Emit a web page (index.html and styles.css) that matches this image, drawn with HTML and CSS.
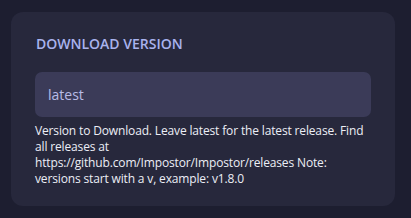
FILE: index.html
```html
<!DOCTYPE html>
<html lang="en">
  <head>
    <meta charset="UTF-8" />
    <meta name="viewport" content="width=device-width, initial-scale=1.0" />
    <title>Download version</title>
    <link rel="stylesheet" href="styles.css">
  </head>
  <body>
    <div class="card">
      <h2 class="title">DOWNLOAD VERSION</h2>
      <input class="field" type="text" value="latest" />
      <p class="help">
        Version to Download. Leave latest for the latest release. Find all releases at
        https://github.com/Impostor/Impostor/releases Note: versions start with a v, example: v1.8.0
      </p>
    </div>
  </body>
</html>
```

FILE: styles.css
```css
body {
  margin: 0;
  padding: 12px 16px 13px 11px;
  background-color: #1d1e30;
  font-family: "Open Sans", "Noto Sans", sans-serif;
}
.card {
  background-color: #27283c;
  border-radius: 12px;
  padding: 22px 24px 19px 24px;
}
.title {
  margin: 0 0 18px 1px;
  font-size: 14px;
  font-weight: 600;
  line-height: 20px;
  color: #a9b3ee;
}
.field {
  display: block;
  box-sizing: border-box;
  width: 100%;
  height: 45px;
  margin: 0;
  padding: 0 13px;
  border: none;
  border-radius: 7px;
  background-color: #3b3b58;
  color: #b8bbe6;
  font-family: inherit;
  font-size: 14px;
  outline: none;
}
.help {
  margin: 6px 0 0 0;
  padding-right: 3px;
  font-size: 12px;
  line-height: 16px;
  letter-spacing: -0.15px;
  color: #eceef6;
}
```
